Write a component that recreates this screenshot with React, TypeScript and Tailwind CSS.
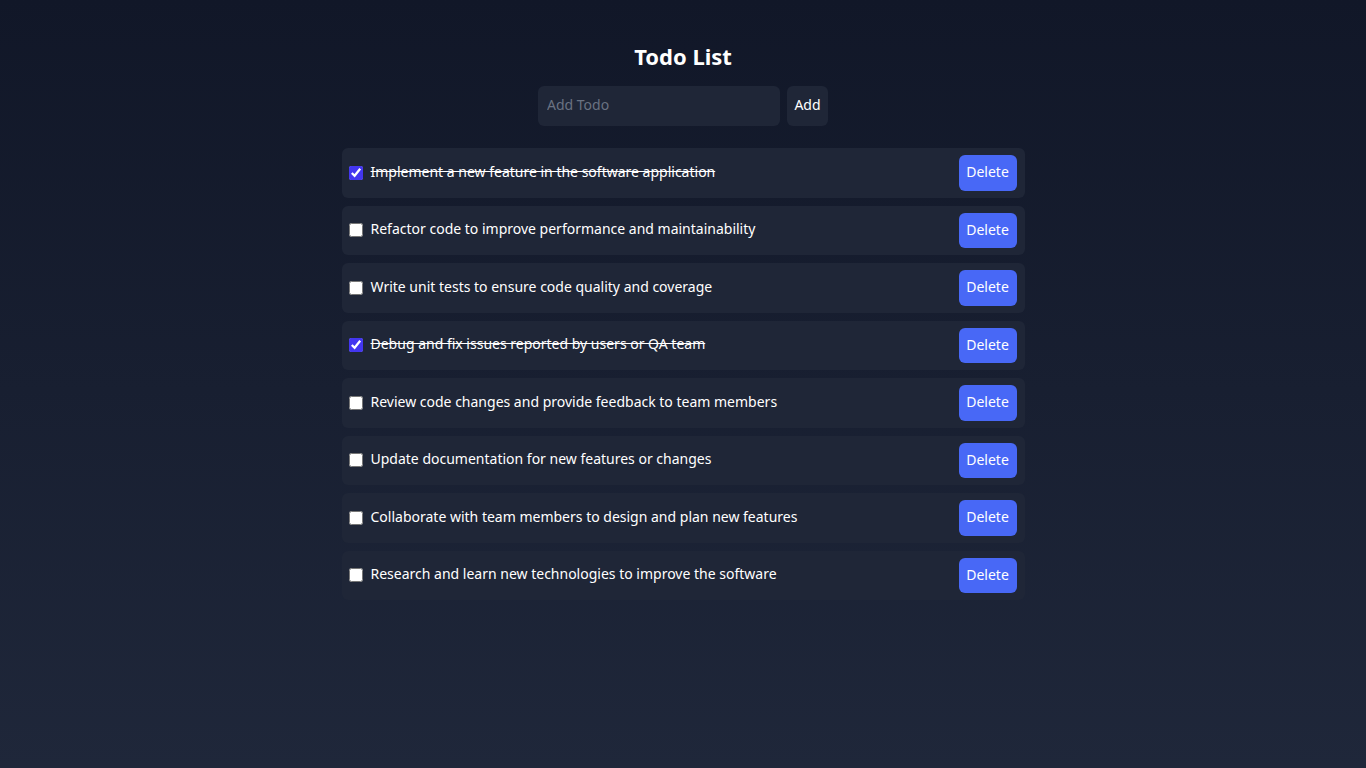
import React, { useState } from "react";

const initial = [
  { text: "Implement a new feature in the software application", done: true },
  { text: "Refactor code to improve performance and maintainability", done: false },
  { text: "Write unit tests to ensure code quality and coverage", done: false },
  { text: "Debug and fix issues reported by users or QA team", done: true },
  { text: "Review code changes and provide feedback to team members", done: false },
  { text: "Update documentation for new features or changes", done: false },
  { text: "Collaborate with team members to design and plan new features", done: false },
  { text: "Research and learn new technologies to improve the software", done: false },
];

export default function App() {
  const [todos, setTodos] = useState(initial);
  const [value, setValue] = useState("");
  return (
    <div
      className="min-h-screen w-full bg-linear-to-b from-[#111728] to-[#1f273a] text-white"
      style={{ fontFamily: '"Noto Sans", "Open Sans", sans-serif' }}
    >
      <div className="flex flex-col items-center pt-[40px]">
        <h1 className="text-[22px] font-bold leading-8 mb-[14px]">Todo List</h1>
        <div className="flex gap-[7px] mb-[22px]">
          <input
            className="w-[242px] h-10 rounded-md bg-[#1f2637] px-[9px] pb-[3px] text-sm text-white placeholder:text-gray-500 outline-none"
            placeholder="Add Todo"
            value={value}
            onChange={(e) => setValue(e.target.value)}
          />
          <button
            className="h-10 w-[41px] rounded-md bg-[#1f2637] pb-[2px] text-sm text-white"
            onClick={() => {
              if (value.trim()) {
                setTodos([...todos, { text: value, done: false }]);
                setValue("");
              }
            }}
          >
            Add
          </button>
        </div>
        <ul className="w-1/2 flex flex-col gap-2">
          {todos.map((t, i) => (
            <li
              key={i}
              className="flex items-center justify-between rounded-md bg-[#1f2637] py-[7px] pl-[7px] pr-2"
            >
              <label className="flex items-center gap-2 text-sm">
                <input
                  type="checkbox"
                  className="w-[14px] h-[14px] accent-[#4336f0]"
                  checked={t.done}
                  onChange={() =>
                    setTodos(todos.map((x, j) => (j === i ? { ...x, done: !x.done } : x)))
                  }
                />
                <span className={"pb-[2px] " + (t.done ? "line-through" : "")}>{t.text}</span>
              </label>
              <button
                className="h-[35.5px] w-[58px] rounded-md bg-[#4868f6] pb-[1px] text-sm text-white"
                onClick={() => setTodos(todos.filter((_, j) => j !== i))}
              >
                Delete
              </button>
            </li>
          ))}
        </ul>
      </div>
    </div>
  );
}
